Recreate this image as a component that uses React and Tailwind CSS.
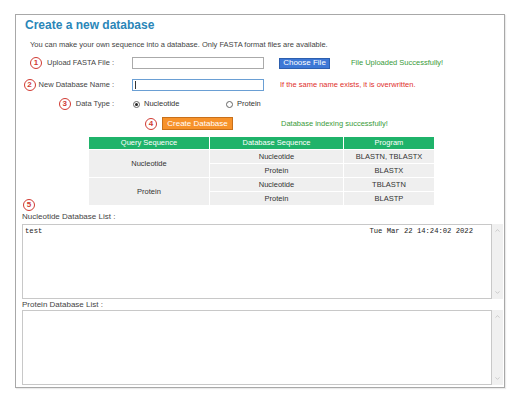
import { ChevronUp, ChevronDown } from 'lucide-react'

function Num({ n }) {
  return (
    <span className="inline-flex w-[12px] h-[12px] rounded-full border-[1.5px] border-[#d03a32] text-[#d03a32] text-[8px] font-bold items-center justify-center leading-none shrink-0">
      {n}
    </span>
  )
}

function Radio({ checked }) {
  return (
    <span className="inline-flex w-[7px] h-[7px] rounded-full border border-[#666] items-center justify-center bg-white shrink-0">
      {checked && <span className="w-[3px] h-[3px] rounded-full bg-[#222]" />}
    </span>
  )
}

function ListBox({ children }) {
  return (
    <div className="flex h-[75px]">
      <div className="w-[470px] h-full border border-[#c8c8c8] bg-white px-[2px] pt-[2px] font-['Liberation_Mono',monospace] text-[7.2px] leading-[9px] text-[#222]">
        {children}
      </div>
      <div className="w-[11px] h-full bg-[#f0f0f0] flex flex-col justify-between items-center py-[3px] text-[#b0b0b0]">
        <ChevronUp size={7} strokeWidth={2} />
        <ChevronDown size={7} strokeWidth={2} />
      </div>
    </div>
  )
}

export default function App() {
  const rows = [
    ['Nucleotide', 'BLASTN, TBLASTX'],
    ['Protein', 'BLASTX'],
    ['Nucleotide', 'TBLASTN'],
    ['Protein', 'BLASTP'],
  ]

  return (
    <div className="w-[514px] h-[410px] bg-white font-['Liberation_Sans',Arial,sans-serif] pt-[14px] pl-[15px] leading-none">
      <div className="w-[490px] h-[374px] border border-[#a8a8a8] pl-[6px] pr-[1px] shadow-[1px_1px_1px_rgba(0,0,0,0.08)]">
        <h1 className="ml-[3px] mt-[3px] text-[12px] leading-[14px] font-bold text-[#2a86b8]">
          Create a new database
        </h1>
        <p className="ml-[8px] mt-[8px] text-[7.5px] leading-[10px] text-[#444]">
          You can make your own sequence into a database. Only FASTA format files are available.
        </p>

        {/* upload */}
        <div className="flex items-center h-[12px] mt-[7px] text-[7.5px] text-[#444]">
          <div className="w-[92px] flex items-center justify-end gap-[5px]">
            <Num n="1" />
            <span>Upload FASTA File :</span>
          </div>
          <div className="ml-[18px] w-[132px] h-[12px] border border-[#aaa] bg-white" />
          <button className="ml-[15px] w-[51px] h-[11px] bg-[#3d78d6] border border-[#2d5fae] text-white text-[8px] leading-none">
            Choose File
          </button>
          <span className="ml-[21px] text-[#3a9b3a]">File Uploaded Successfully!</span>
        </div>

        {/* name */}
        <div className="flex items-center h-[12px] mt-[10px] text-[7.5px] text-[#444]">
          <div className="w-[92px] flex items-center justify-end gap-[3px]">
            <Num n="2" />
            <span>New Database Name :</span>
          </div>
          <div className="ml-[18px] w-[132px] h-[12px] border border-[#6a9fd4] bg-white pl-[2px] flex items-center">
            <span className="w-px h-[8px] bg-[#333]" />
          </div>
          <span className="ml-[16px] text-[#e0302c]">If the same name exists, it is overwritten.</span>
        </div>

        {/* data type */}
        <div className="flex items-center h-[12px] mt-[7px] text-[7.5px] text-[#444]">
          <div className="w-[92px] flex items-center justify-end gap-[5px]">
            <Num n="3" />
            <span>Data Type :</span>
          </div>
          <div className="ml-[19px] w-[93px] flex items-center gap-[4px]">
            <Radio checked />
            <span className="text-[#333]">Nucleotide</span>
          </div>
          <div className="flex items-center gap-[4px]">
            <Radio />
            <span className="text-[#333]">Protein</span>
          </div>
        </div>

        {/* create */}
        <div className="flex items-center h-[13px] mt-[7px] text-[7.5px]">
          <div className="ml-[123px] flex">
            <Num n="4" />
          </div>
          <button className="ml-[5px] w-[71px] h-[13px] bg-[#f7922a] border border-[#c8701a] text-white text-[8px] leading-none">
            Create Database
          </button>
          <span className="ml-[48px] text-[#3a9b3a]">Database indexing successfully!</span>
        </div>

        {/* table */}
        <div className="mt-[7px] ml-[67px] grid grid-cols-[120px_133px_90px] gap-[1px] text-[7.5px] text-[#333] text-center">
          <div className="h-[12px] bg-[#1fb36a] text-white flex items-center justify-center">Query Sequence</div>
          <div className="h-[12px] bg-[#1fb36a] text-white flex items-center justify-center">Database Sequence</div>
          <div className="h-[12px] bg-[#1fb36a] text-white flex items-center justify-center">Program</div>

          <div className="row-span-2 bg-[#efefef] flex items-center justify-center">Nucleotide</div>
          <div className="h-[13px] bg-[#efefef] flex items-center justify-center">{rows[0][0]}</div>
          <div className="h-[13px] bg-[#efefef] flex items-center justify-center">{rows[0][1]}</div>
          <div className="h-[13px] bg-[#efefef] flex items-center justify-center">{rows[1][0]}</div>
          <div className="h-[13px] bg-[#efefef] flex items-center justify-center">{rows[1][1]}</div>

          <div className="row-span-2 bg-[#efefef] flex items-center justify-center">Protein</div>
          <div className="h-[13px] bg-[#efefef] flex items-center justify-center">{rows[2][0]}</div>
          <div className="h-[13px] bg-[#efefef] flex items-center justify-center">{rows[2][1]}</div>
          <div className="h-[13px] bg-[#efefef] flex items-center justify-center">{rows[3][0]}</div>
          <div className="h-[13px] bg-[#efefef] flex items-center justify-center">{rows[3][1]}</div>
        </div>

        <div className="-mt-[6px] ml-[1px] flex">
          <Num n="5" />
        </div>

        <div className="h-[10px] leading-[10px] mt-px text-[8px] text-[#444]">Nucleotide Database List :</div>
        <div className="mt-[2px]">
          <ListBox>
            <div className="flex justify-between pr-[16px]">
              <span>test</span>
              <span>Tue Mar 22 14:24:02 2022</span>
            </div>
          </ListBox>
        </div>

        <div className="h-[10px] leading-[10px] mt-px text-[8px] text-[#444]">Protein Database List :</div>
        <ListBox />
      </div>
    </div>
  )
}
